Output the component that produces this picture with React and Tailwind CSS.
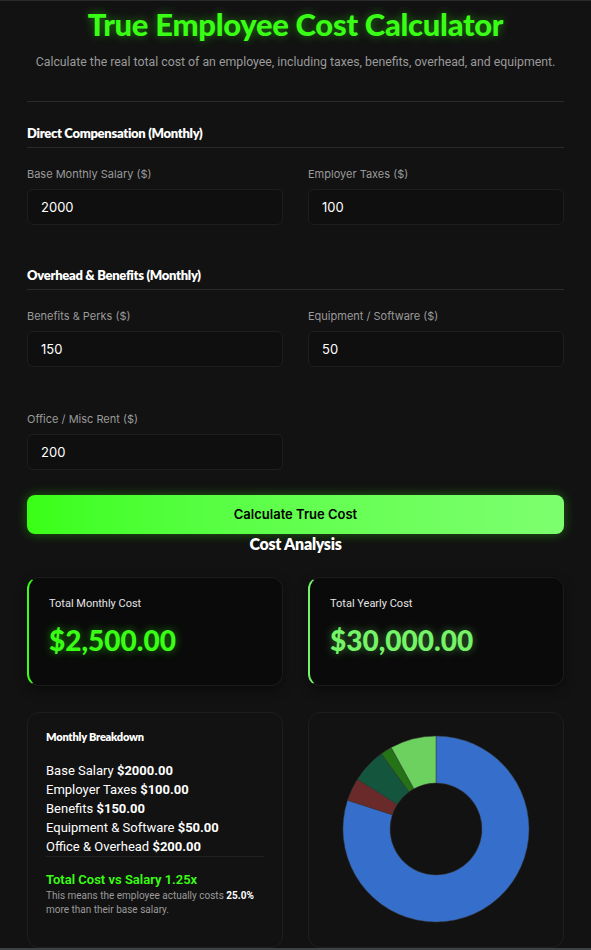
import React from 'react'

const head = { fontFamily: 'Lato, "Noto Sans", sans-serif' }
const body = { fontFamily: 'Inter, "Noto Sans", sans-serif' }
const rob = { fontFamily: 'Roboto, "Liberation Sans", sans-serif' }

const slices = [
  { v: 2000, c: '#366fcb' },
  { v: 100, c: '#6b2a2a' },
  { v: 150, c: '#14553d' },
  { v: 50, c: '#247316' },
  { v: 200, c: '#6cd15f' },
]

function Donut() {
  const total = slices.reduce((s, x) => s + x.v, 0)
  const R = 93, r = 46, cx = 100, cy = 100
  let a0 = -Math.PI / 2
  const pt = (rad, a) => `${cx + rad * Math.cos(a)} ${cy + rad * Math.sin(a)}`
  return (
    <svg width="200" height="200" viewBox="0 0 200 200">
      {slices.map((s, i) => {
        const a1 = a0 + (s.v / total) * Math.PI * 2
        const large = a1 - a0 > Math.PI ? 1 : 0
        const d = `M ${pt(R, a0)} A ${R} ${R} 0 ${large} 1 ${pt(R, a1)} L ${pt(r, a1)} A ${r} ${r} 0 ${large} 0 ${pt(r, a0)} Z`
        a0 = a1
        return <path key={i} d={d} fill={s.c} stroke="#3a3a3a" strokeWidth="0.5" />
      })}
    </svg>
  )
}

function Field({ label, value }) {
  return (
    <div>
      <div className="text-[11px] leading-4 text-[#9a9a9a]" style={body}>{label}</div>
      <div className="mt-[7px] h-9 rounded-md border border-[#1e1e1e] bg-[#0f0f0f] pl-[13px] pt-[2px] flex items-center text-[13px] text-white" style={body}>
        {value}
      </div>
    </div>
  )
}

function Section({ title }) {
  return (
    <div className="border-b border-[#2a2a2a] pb-[5px] text-[13px] leading-[18px] font-extrabold tracking-[-0.3px] text-white" style={head}>
      {title}
    </div>
  )
}

export default function App() {
  return (
    <div className="min-h-[950px] bg-[#121212] border-t border-[#2a2a2a] px-[27px]">
      <h1 className="pt-[5px] text-center text-[31px] leading-9 font-black tracking-[-0.3px] text-[#39ff14] [text-shadow:0_0_10px_rgba(57,255,20,0.45)]" style={head}>
        True Employee Cost Calculator
      </h1>
      <p className="mt-[11px] text-center text-[12.3px] leading-[18px] text-[#9a9a9a]" style={rob}>
        Calculate the real total cost of an employee, including taxes, benefits, overhead, and equipment.
      </p>
      <div className="mt-[30px] border-t border-[#2a2a2a]" />

      <div className="mt-[22px]">
        <Section title="Direct Compensation (Monthly)" />
        <div className="mt-[18px] grid grid-cols-2 gap-x-[25px]">
          <Field label="Base Monthly Salary ($)" value="2000" />
          <Field label="Employer Taxes ($)" value="100" />
        </div>
      </div>

      <div className="mt-[41px]">
        <Section title="Overhead & Benefits (Monthly)" />
        <div className="mt-[18px] grid grid-cols-2 gap-x-[25px] gap-y-[44px]">
          <Field label="Benefits & Perks ($)" value="150" />
          <Field label="Equipment / Software ($)" value="50" />
          <Field label="Office / Misc Rent ($)" value="200" />
        </div>
      </div>

      <button className="mt-[25px] w-full h-[39px] rounded-lg bg-linear-to-r from-[#39ff14] to-[#7dff6e] text-[13px] font-semibold text-black shadow-[0_0_12px_rgba(57,255,20,0.35)]" style={body}>
        Calculate True Cost
      </button>
      <h2 className="text-center text-[16px] leading-5 font-extrabold tracking-[-0.3px] text-white" style={head}>Cost Analysis</h2>

      <div className="mt-[23px] grid grid-cols-2 gap-x-[25px]">
        {[
          ['Total Monthly Cost', '$2,500.00', 'text-[#39ff14] [text-shadow:0_0_8px_rgba(57,255,20,0.5)]'],
          ['Total Yearly Cost', '$30,000.00', 'text-[#74f466] [text-shadow:0_0_8px_rgba(116,244,102,0.45)]'],
        ].map(([l, v, c], i) => (
          <div key={i} className={`h-[109px] rounded-xl border border-[#1c1c1c] border-l-2 bg-[#0a0a0a] pl-5 pt-[18px] shadow-[0_4px_12px_rgba(0,0,0,0.4)] ${i === 0 ? 'border-l-[#39ff14]' : 'border-l-[#74f466]'}`}>
            <div className="text-[11px] leading-4 text-[#e5e5e5]" style={rob}>{l}</div>
            <div className={`mt-[10px] text-[28px] leading-9 font-black ${c}`} style={head}>{v}</div>
          </div>
        ))}
      </div>

      <div className="mt-[26px] grid grid-cols-2 gap-x-[25px]">
        <div className="h-[236px] rounded-xl border border-[#1e1e1e] px-[18px] pt-4">
          <div className="text-[11px] leading-4 font-extrabold tracking-[-0.2px] text-white" style={head}>Monthly Breakdown</div>
          <div className="mt-4 text-[13px] leading-[19px] text-white" style={rob}>
            <div>Base Salary <b>$2000.00</b></div>
            <div>Employer Taxes <b>$100.00</b></div>
            <div>Benefits <b>$150.00</b></div>
            <div>Equipment &amp; Software <b>$50.00</b></div>
            <div>Office &amp; Overhead <b>$200.00</b></div>
          </div>
          <div className="border-t border-[#222]" />
          <div className="mt-[14px] text-[13px] leading-[18px] font-semibold text-[#39ff14]" style={rob}>Total Cost vs Salary 1.25x</div>
          <div className="text-[10px] leading-[14px] text-[#9a9a9a]" style={rob}>
            This means the employee actually costs <b className="text-white">25.0%</b> more than their base salary.
          </div>
        </div>
        <div className="h-[236px] rounded-xl border border-[#1e1e1e] flex justify-center pt-[16px]">
          <Donut />
        </div>
      </div>
      <div className="-mx-[27px] h-[3px] bg-[#3c4244]" />
    </div>
  )
}
